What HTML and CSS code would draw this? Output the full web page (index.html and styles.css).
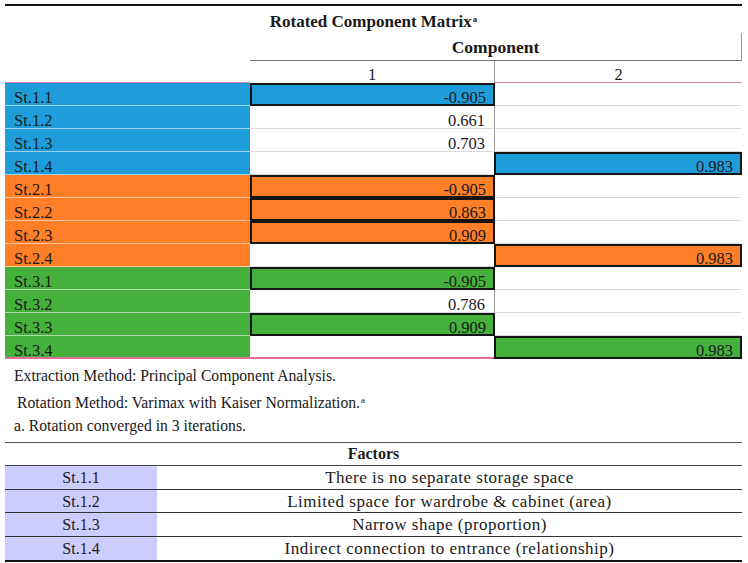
FILE: index.html
```html
<!DOCTYPE html>
<html>
<head>
<meta charset="utf-8">
<link rel="stylesheet" href="styles.css">
</head>
<body>
<div class="page">
  <div class="rule"></div>
  <div class="matrix">
    <div class="title">Rotated Component Matrix<sup>a</sup></div>
    <div class="corner"></div>
    <div class="comp">Component</div>
    <div class="corner2"></div>
    <div class="colh c1h">1</div>
    <div class="colh c2h">2</div>

    <div class="lab blue">St.1.1</div><div class="v1 hl blue">-0.905</div><div class="v2"></div>
    <div class="lab blue">St.1.2</div><div class="v1">0.661</div><div class="v2"></div>
    <div class="lab blue">St.1.3</div><div class="v1">0.703</div><div class="v2"></div>
    <div class="lab blue">St.1.4</div><div class="v1"></div><div class="v2 hl blue">0.983</div>

    <div class="lab orange">St.2.1</div><div class="v1 hl orange">-0.905</div><div class="v2"></div>
    <div class="lab orange">St.2.2</div><div class="v1 hl orange">0.863</div><div class="v2"></div>
    <div class="lab orange">St.2.3</div><div class="v1 hl orange">0.909</div><div class="v2"></div>
    <div class="lab orange">St.2.4</div><div class="v1"></div><div class="v2 hl orange">0.983</div>

    <div class="lab green">St.3.1</div><div class="v1 hl green">-0.905</div><div class="v2"></div>
    <div class="lab green">St.3.2</div><div class="v1">0.786</div><div class="v2"></div>
    <div class="lab green">St.3.3</div><div class="v1 hl green">0.909</div><div class="v2"></div>
    <div class="lab green last">St.3.4</div><div class="v1 last"></div><div class="v2 hl green">0.983</div>
  </div>

  <div class="notes">
    <p class="n1">Extraction Method: Principal Component Analysis.</p>
    <p class="n2">Rotation Method: Varimax with Kaiser Normalization.<sup>a</sup></p>
    <p class="n3">a. Rotation converged in 3 iterations.</p>
  </div>

  <div class="factors">
    <div class="fhead">Factors</div>
    <div class="fid">St.1.1</div><div class="fdesc">There is no separate storage space</div>
    <div class="fid">St.1.2</div><div class="fdesc">Limited space for wardrobe &amp; cabinet (area)</div>
    <div class="fid">St.1.3</div><div class="fdesc">Narrow shape (proportion)</div>
    <div class="fid flast">St.1.4</div><div class="fdesc flast">Indirect connection to entrance (relationship)</div>
  </div>
</div>
</body>
</html>
```

FILE: styles.css
```css
html, body {
  margin: 0;
  padding: 0;
  background: #ffffff;
}

body {
  font-family: "Liberation Serif", "Times New Roman", serif;
  color: #1a1a1a;
  font-size: 16.5px;
}

.page {
  width: 737px;
  margin-left: 5px;
  padding-top: 4px;
}

.rule {
  display: block;
  height: 2px;
  min-height: 2px;
  width: 737px;
  background-color: #111111;
}

.matrix {
  display: grid;
  grid-template-columns: 245px 245px 247px;
  grid-template-rows: 27px 28px 22px;
  grid-auto-rows: 23px;
}

.title {
  grid-column: 1 / 4;
  grid-row: 1;
  height: 27px;
  text-align: center;
  font-weight: bold;
  font-size: 17px;
  line-height: 26px;
}

.title sup, .notes sup {
  font-size: 9px;
  vertical-align: 5px;
  margin-left: 1px;
}

.corner {
  grid-row: 2;
  grid-column: 1;
  height: 28px;
}

.comp {
  grid-row: 2;
  grid-column: 2 / 4;
  height: 28px;
  box-sizing: border-box;
  border-bottom: 1px solid #777;
  border-right: 1px solid #999;
  text-align: center;
  font-weight: bold;
  font-size: 17.5px;
  line-height: 28px;
}

.corner2 {
  grid-row: 3;
  grid-column: 1;
  height: 22px;
  box-sizing: border-box;
  border-bottom: 1px solid #d9819f;
}

.colh {
  grid-row: 3;
  height: 22px;
  box-sizing: border-box;
  text-align: center;
  line-height: 19px;
  padding-top: 4px;
}

.c1h {
  grid-column: 2;
  border-right: 1px solid #999;
}

.c2h {
  grid-column: 3;
  border-bottom: 1px solid #d9819f;
}

.lab, .v1, .v2 {
  height: 23px;
  box-sizing: border-box;
  line-height: 18px;
  padding-top: 6px;
  white-space: nowrap;
}

.lab {
  padding-left: 9px;
  border-bottom: 1px solid rgba(255, 255, 255, 0.55);
}

.v1, .v2 {
  text-align: right;
  padding-right: 9px;
  border-bottom: 1px solid #dadada;
}

.v1 {
  border-right: 1px solid #999;
}

.v2 {
  margin-right: 1px;
}

.hl {
  border: 2px solid #151515;
  padding-right: 7px;
  padding-top: 4px;
}

.v1.hl {
  border-right: 2px solid #151515;
}

.v2.hl {
  margin-left: -1px;
  margin-right: 0;
}

.blue { background: #1f9dda; }
.orange { background: #fe7f27; }
.green { background: #45b03c; }

.lab.last, .v1.last {
  border-bottom: 2px solid #de6b98;
}

.notes {
  padding-top: 4px;
}

.notes p {
  margin: 0;
  height: 25px;
  line-height: 25px;
  font-size: 15.7px;
}

.n1 { padding-left: 9px; }
.n2 { padding-left: 12px; }
.n3 { padding-left: 9px; }

.factors {
  margin-top: 4px;
  display: grid;
  grid-template-columns: 152px 585px;
  grid-template-rows: 23px repeat(4, 23.5px);
  border-top: 1px solid #555;
  border-bottom: 2px solid #111;
}

.fhead {
  grid-column: 1 / 3;
  box-sizing: border-box;
  line-height: 22px;
  text-align: center;
  font-weight: bold;
  font-size: 16px;
  border-bottom: 1px solid #444;
}

.fid, .fdesc {
  box-sizing: border-box;
  line-height: 23px;
  text-align: center;
  font-size: 16px;
  border-bottom: 1px solid #333;
}

.fdesc {
  font-size: 17px;
  letter-spacing: 0.5px;
}

.fid {
  background: #ccccfe;
}

.fid.flast, .fdesc.flast {
  border-bottom: none;
}
```
